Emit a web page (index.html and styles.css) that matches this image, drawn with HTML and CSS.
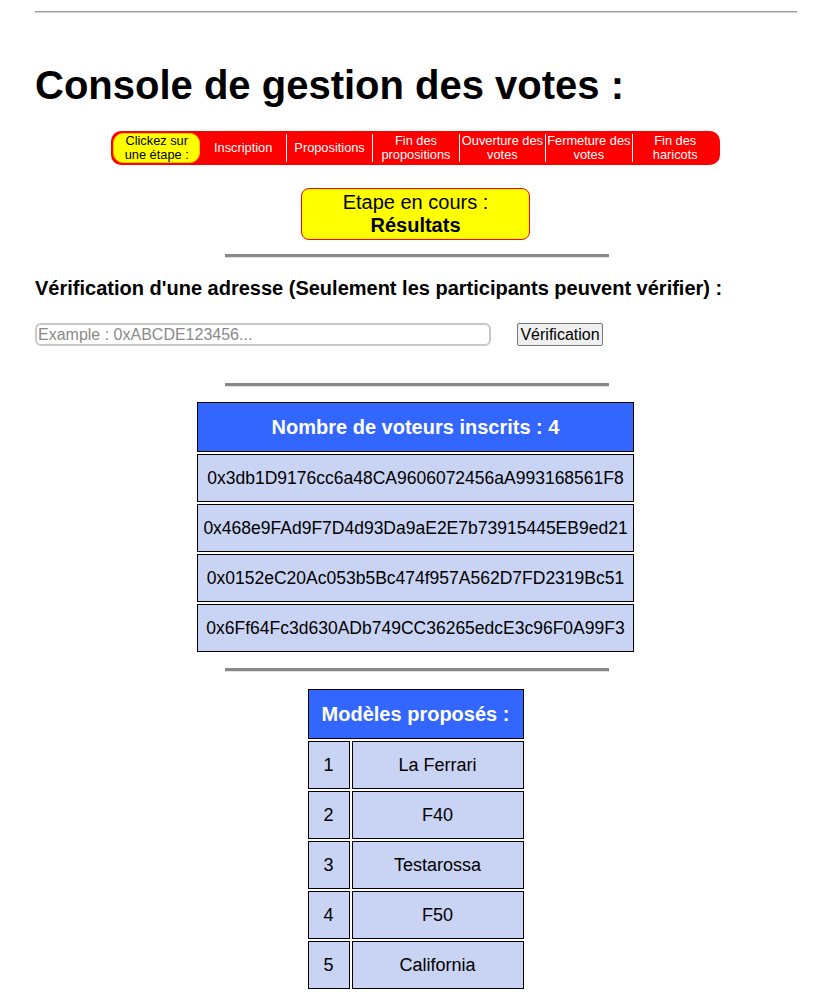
FILE: index.html
```html
<!DOCTYPE html>
<html lang="fr">
<head>
<meta charset="utf-8">
<title>Console de gestion des votes</title>
<link rel="stylesheet" href="styles.css">
</head>
<body>
<div class="page">
  <hr class="top-rule">
  <h1 class="title">Console de gestion des votes :</h1>

  <nav class="steps">
    <div class="step step-label">Clickez sur<br>une étape :</div>
    <div class="step">Inscription</div>
    <div class="step">Propositions</div>
    <div class="step">Fin des<br>propositions</div>
    <div class="step">Ouverture des<br>votes</div>
    <div class="step">Fermeture des<br>votes</div>
    <div class="step">Fin des<br>haricots</div>
  </nav>

  <div class="current">
    <div>Etape en cours :</div>
    <div class="current-name">Résultats</div>
  </div>

  <hr class="sep sep-1">

  <h3 class="verify-title">Vérification d'une adresse (Seulement les participants peuvent vérifier) :</h3>
  <div class="verify-row">
    <input class="verify-input" type="text" placeholder="Example : 0xABCDE123456...">
    <button class="verify-btn">Vérification</button>
  </div>

  <hr class="sep sep-2">

  <table class="grid voters">
    <thead>
      <tr><th>Nombre de voteurs inscrits : 4</th></tr>
    </thead>
    <tbody>
      <tr><td>0x3db1D9176cc6a48CA9606072456aA993168561F8</td></tr>
      <tr><td>0x468e9FAd9F7D4d93Da9aE2E7b73915445EB9ed21</td></tr>
      <tr><td>0x0152eC20Ac053b5Bc474f957A562D7FD2319Bc51</td></tr>
      <tr><td>0x6Ff64Fc3d630ADb749CC36265edcE3c96F0A99F3</td></tr>
    </tbody>
  </table>

  <hr class="sep sep-3">

  <table class="grid models">
    <thead>
      <tr><th colspan="2">Modèles proposés :</th></tr>
    </thead>
    <tbody>
      <tr><td class="num">1</td><td class="name">La Ferrari</td></tr>
      <tr><td class="num">2</td><td class="name">F40</td></tr>
      <tr><td class="num">3</td><td class="name">Testarossa</td></tr>
      <tr><td class="num">4</td><td class="name">F50</td></tr>
      <tr><td class="num">5</td><td class="name">California</td></tr>
    </tbody>
  </table>
</div>
</body>
</html>
```

FILE: styles.css
```css
html, body {
  margin: 0;
  padding: 0;
  background: #ffffff;
}

body {
  font-family: "Liberation Sans", Arial, sans-serif;
  color: #000;
}

.page {
  margin-left: 35px;
  width: 761px;
  padding-top: 11px;
  padding-bottom: 20px;
}

.top-rule {
  margin: 0;
  width: 762px;
  border: 0;
  border-top: 1px solid #9a9a9a;
  border-bottom: 1px solid #d8d8d8;
  height: 0;
}

.title {
  font-size: 40px;
  font-weight: bold;
  line-height: 46px;
  margin: 49px 0 0 0;
}

.steps {
  display: flex;
  width: 605px;
  margin: 23px auto 0 auto;
  background: #ff0000;
  border-radius: 10px;
  padding: 2px;
}

.step {
  flex: 1 1 0;
  display: flex;
  align-items: center;
  justify-content: center;
  text-align: center;
  color: #ffffff;
  font-size: 12.8px;
  line-height: 14px;
  border-left: 1px solid #ffffff;
  margin: 1px 0;
  height: 28px;
  white-space: nowrap;
}

.step:nth-child(2) {
  border-left: 0;
}

.step-label {
  background: #ffff00;
  color: #000;
  border: 1px solid #e4c400;
  border-radius: 10px;
  margin: 0;
  height: 28px;
}

.current {
  width: 227px;
  margin: 23px auto 0 auto;
  background: #ffff00;
  border: 1px solid #ff0000;
  border-radius: 8px;
  text-align: center;
  font-size: 20px;
  line-height: 23px;
  padding: 2px 0;
}

.current-name {
  font-weight: bold;
}

.sep {
  width: 384px;
  margin: 14px 0 0 190px;
  border: 0;
  height: 0;
  border-top: 3px solid #888888;
  border-bottom: 1px solid #e2e2e2;
}

.verify-title {
  font-size: 20px;
  font-weight: bold;
  margin: 19px 0 0 0;
  line-height: 23px;
}

.verify-row {
  display: flex;
  align-items: center;
  gap: 26px;
  margin-top: 23px;
}

.verify-input {
  width: 456px;
  height: 23px;
  box-sizing: border-box;
  border: 2px solid #c8c8c8;
  border-radius: 6px;
  font-family: "Liberation Sans", Arial, sans-serif;
  font-size: 16px;
  padding: 0 1px;
  color: #000;
}

.verify-input::placeholder {
  color: #8a8a8a;
}

.verify-btn {
  height: 23px;
  width: 86px;
  box-sizing: border-box;
  font-family: "Liberation Sans", Arial, sans-serif;
  font-size: 16px;
  padding: 0 2px;
  background: #efefef;
  border: 1px solid #767676;
  border-radius: 2px;
  color: #000;
}

.sep-2 {
  margin-top: 37px;
}

.grid {
  border-collapse: separate;
  border-spacing: 2px;
  margin: 15px auto 0 auto;
}

.grid.voters {
  margin-top: 13px;
}

.grid th {
  background: #3366ff;
  color: #ffffff;
  font-size: 20px;
  font-weight: bold;
  border: 1px solid #000;
  height: 48px;
  padding: 0 10px;
}

.grid td {
  background: #c9d3f3;
  border: 1px solid #000;
  font-size: 18px;
  text-align: center;
  height: 46px;
  padding: 0 5px;
}

.voters td {
  font-size: 17.5px;
}

.sep-3 {
  margin-top: 14px;
}

.models .num {
  width: 30px;
}

.models .name {
  width: 160px;
}
```
